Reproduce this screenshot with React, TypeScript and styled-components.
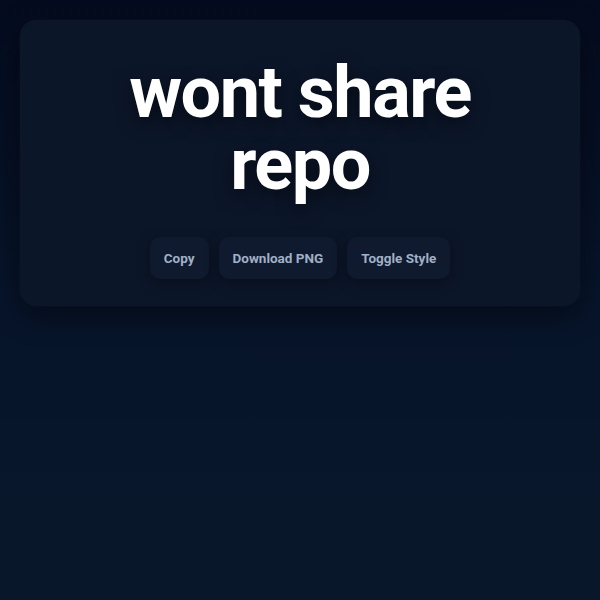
import React from 'react';
import styled, { createGlobalStyle } from 'styled-components';

const GlobalStyle = createGlobalStyle`
  html, body {
    margin: 0;
    padding: 0;
    min-height: 100%;
  }
  body {
    min-height: 600px;
    background: linear-gradient(180deg, #040b1e 0%, #07142a 50%, #08182a 100%);
    font-family: Roboto, "Liberation Sans", sans-serif;
  }
`;

const Page = styled.main`
  padding: 20px;
`;

const Card = styled.section`
  display: flex;
  flex-direction: column;
  align-items: center;
  gap: 36px;
  padding: 37px 24px 27px;
  border-radius: 16px;
  background: #0c1629;
  box-shadow: 0 10px 30px rgba(0, 0, 0, 0.45), 0 0 0 1px rgba(255, 255, 255, 0.015);
`;

const Title = styled.h1`
  margin: 0;
  font-family: Roboto, "Liberation Sans", sans-serif;
  font-size: 72px;
  font-weight: 700;
  line-height: 72px;
  letter-spacing: -1.5px;
  color: #ffffff;
  text-align: center;
  text-shadow: 0 6px 18px rgba(0, 0, 0, 0.55);
`;

const Actions = styled.div`
  display: flex;
  gap: 10px;
`;

const ActionButton = styled.button`
  padding: 12px 14px;
  border: none;
  border-radius: 10px;
  background: #0f1a2e;
  color: #a0b0c6;
  font-family: Roboto, "Liberation Sans", sans-serif;
  font-size: 13.5px;
  font-weight: 700;
  line-height: 18px;
  cursor: pointer;
  box-shadow: 0 4px 14px rgba(0, 0, 0, 0.35);

  &:hover {
    background: #14213a;
  }
`;

export default function App() {
  return (
    <>
      <GlobalStyle />
      <Page>
        <Card>
          <Title>
            wont share
            <br />
            repo
          </Title>
          <Actions>
            <ActionButton>Copy</ActionButton>
            <ActionButton>Download PNG</ActionButton>
            <ActionButton>Toggle Style</ActionButton>
          </Actions>
        </Card>
      </Page>
    </>
  );
}
